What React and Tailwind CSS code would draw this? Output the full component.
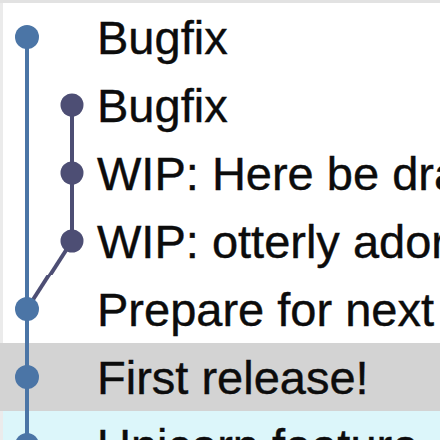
import React from "react";

const MAIN = "#4b75a6";
const BR = "#4d4e74";

function Graph({ kind }) {
  const W = 94, H = 68, C = 34, mx = 24, bx = 69;
  return (
    <svg width={W} height={H} viewBox={`0 0 ${W} ${H}`} className="shrink-0 block">
      {kind === 0 ? (
        <line x1={mx} y1={C} x2={mx} y2={H} stroke={MAIN} strokeWidth="4" />
      ) : (
        <line x1={mx} y1={0} x2={mx} y2={H} stroke={MAIN} strokeWidth="4" />
      )}
      {kind === 1 && <line x1={bx} y1={C} x2={bx} y2={H} stroke={BR} strokeWidth="4" />}
      {kind === 2 && <line x1={bx} y1={0} x2={bx} y2={H} stroke={BR} strokeWidth="4" />}
      {kind === 3 && (
        <>
          <line x1={bx} y1={0} x2={bx} y2={C} stroke={BR} strokeWidth="4" />
          <line x1={bx} y1={C} x2={mx + (bx - mx) / 2} y2={H + 1} stroke={BR} strokeWidth="4" />
        </>
      )}
      {kind === 4 && (
        <line x1={mx + (bx - mx) / 2} y1={-1} x2={mx} y2={C} stroke={BR} strokeWidth="4" />
      )}
      {kind >= 1 && kind <= 3 ? (
        <circle cx={bx} cy={C} r="11.5" fill={BR} />
      ) : (
        <circle cx={mx} cy={C} r="12" fill={MAIN} />
      )}
    </svg>
  );
}

const rows = [
  { text: "Bugfix", kind: 0, bg: "bg-white" },
  { text: "Bugfix", kind: 1, bg: "bg-white" },
  { text: "WIP: Here be dragons", kind: 2, bg: "bg-white" },
  { text: "WIP: otterly adorable", kind: 3, bg: "bg-white" },
  { text: "Prepare for next release", kind: 4, bg: "bg-white" },
  { text: "First release!", kind: 5, bg: "bg-[#d3d3d3]" },
  { text: "Unicorn feature", kind: 6, bg: "bg-[#dcf6fa]" },
];

export default function App() {
  return (
    <div className="w-[440px] h-[440px] overflow-hidden bg-white flex flex-col" style={{ fontFamily: '"Liberation Sans", Arial, sans-serif' }}>
      <div className="h-[3px] shrink-0 bg-[#e2e2e2]" />
      {rows.map((r, i) => (
        <div key={i} className={`flex items-center h-[68px] shrink-0 ${r.bg}`}>
          <div className={`w-[3px] h-full shrink-0 ${i === 5 ? "bg-[#d3d3d3]" : "bg-[#ebebeb]"}`} />
          <Graph kind={r.kind} />
          <span className="text-[47px] leading-none text-[#0c0c0c] whitespace-nowrap [-webkit-text-stroke:0.4px_#0c0c0c]">{r.text}</span>
        </div>
      ))}
    </div>
  );
}
